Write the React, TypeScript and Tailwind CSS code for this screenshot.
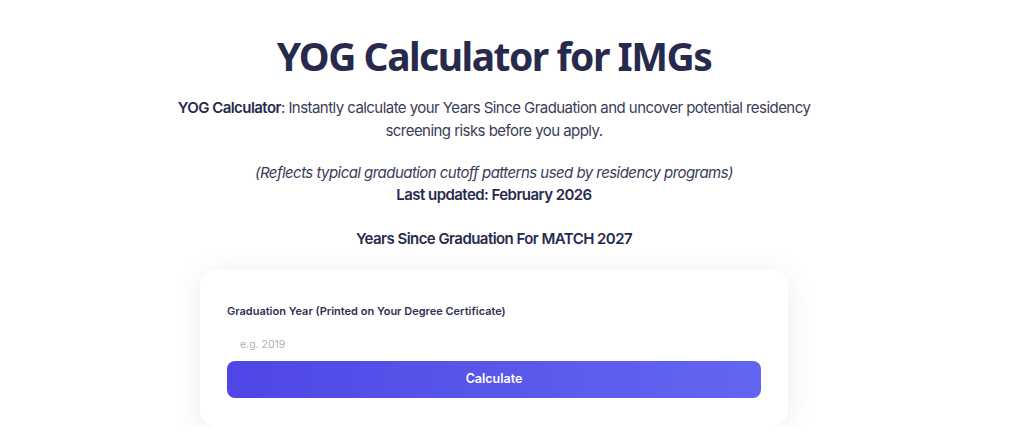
export default function App() {
  return (
    <div className="w-[988px] bg-white text-[#2b2d4a]" style={{ fontFamily: 'Inter, "Noto Sans", sans-serif' }}>
      <div className="flex flex-col items-center pt-[28px]">
        <h1 className="text-[39px] leading-[56px] font-bold tracking-[-1.5px] text-[#272a4d]" style={{ fontFamily: '"Noto Sans", "Open Sans", sans-serif' }}>
          YOG Calculator for IMGs
        </h1>
        <p className="mt-[12px] w-[650px] text-center text-[15px] leading-[23px] tracking-[-0.55px] text-[#3a3c58]">
          <span className="font-semibold text-[#272a4d]">YOG Calculator</span>: Instantly calculate your Years Since Graduation and uncover potential residency screening risks before you apply.
        </p>
        <p className="mt-[20px] text-center text-[15px] leading-[22px] tracking-[-0.55px] italic text-[#3a3c58]">
          (Reflects typical graduation cutoff patterns used by residency programs)
        </p>
        <p className="text-center text-[15px] leading-[22px] tracking-[-0.55px] font-semibold text-[#272a4d]">Last updated: February 2026</p>
        <p className="mt-[22px] text-center text-[15px] leading-[22px] tracking-[-0.55px] font-semibold text-[#272a4d]">Years Since Graduation For MATCH 2027</p>
        <div className="mt-[20px] w-[588px] rounded-[16px] bg-white px-[27px] pt-[33px] pb-[28px] shadow-[0_4px_30px_rgba(0,0,0,0.08)]">
          <div className="text-[11px] font-semibold text-[#2f3150]">Graduation Year (Printed on Your Degree Certificate)</div>
          <input className="mt-[11px] h-[28px] w-full px-[13px] text-[10.5px] text-[#333] outline-none placeholder:text-[#b0b0b0]" placeholder="e.g. 2019" />
          <button className="mt-[2px] flex h-[37px] w-full items-center justify-center rounded-[8px] bg-gradient-to-r from-[#4f46e5] to-[#6366f1] text-[12.5px] font-semibold text-white">
            Calculate
          </button>
        </div>
      </div>
    </div>
  );
}
